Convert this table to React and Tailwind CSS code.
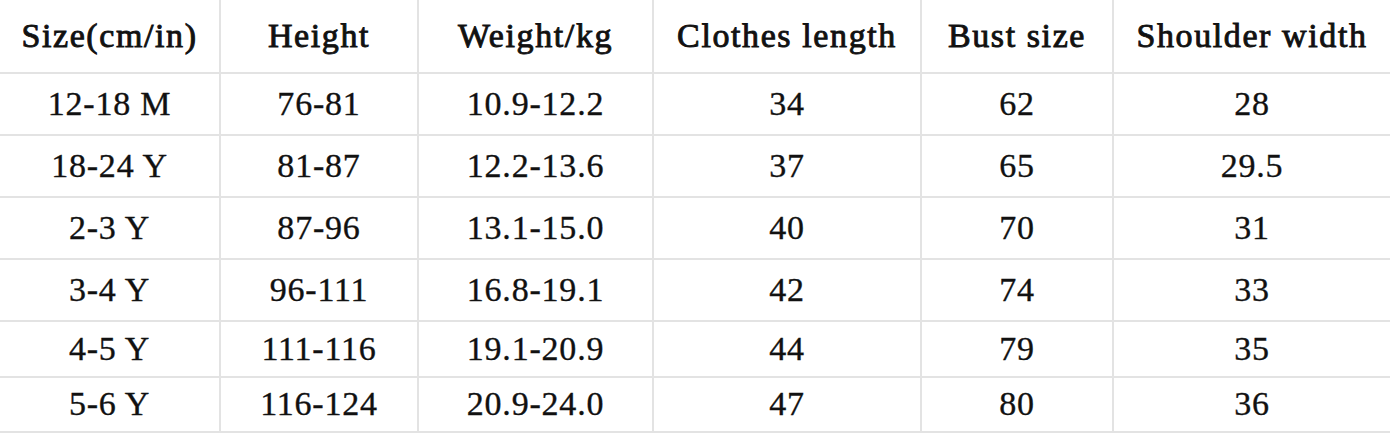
import React from "react";

const headers = ["Size(cm/in)", "Height", "Weight/kg", "Clothes length", "Bust size", "Shoulder width"];
const rows = [
  ["12-18 M", "76-81", "10.9-12.2", "34", "62", "28"],
  ["18-24 Y", "81-87", "12.2-13.6", "37", "65", "29.5"],
  ["2-3 Y", "87-96", "13.1-15.0", "40", "70", "31"],
  ["3-4 Y", "96-111", "16.8-19.1", "42", "74", "33"],
  ["4-5 Y", "111-116", "19.1-20.9", "44", "79", "35"],
  ["5-6 Y", "116-124", "20.9-24.0", "47", "80", "36"],
];
const heights = ["h-[62px]", "h-[62px]", "h-[62px]", "h-[62px]", "h-[56px]", "h-[55px]"];

export default function App() {
  return (
    <div className="w-[1390px] h-[434px] bg-white text-[#111] font-['Liberation_Serif',serif]">
      <div className="grid grid-cols-[221px_198px_235px_268px_192px_1fr]">
        {headers.map((h, i) => (
          <div
            key={h}
            className={`h-[74px] pb-[2px] flex items-center justify-center border-b-2 border-[#e3e3e3] text-[34px] tracking-[1.6px] [-webkit-text-stroke:0.9px_#111] ${i < 5 ? "border-r-2" : ""}`}
          >
            {h}
          </div>
        ))}
        {rows.map((r, ri) =>
          r.map((c, ci) => (
            <div
              key={ri + "-" + ci}
              className={`${heights[ri]} pb-[2px] flex items-center justify-center border-b-2 border-[#e3e3e3] text-[34px] tracking-[0.8px] [-webkit-text-stroke:0.35px_#111] ${ci < 5 ? "border-r-2" : ""}`}
            >
              {c}
            </div>
          ))
        )}
      </div>
    </div>
  );
}
